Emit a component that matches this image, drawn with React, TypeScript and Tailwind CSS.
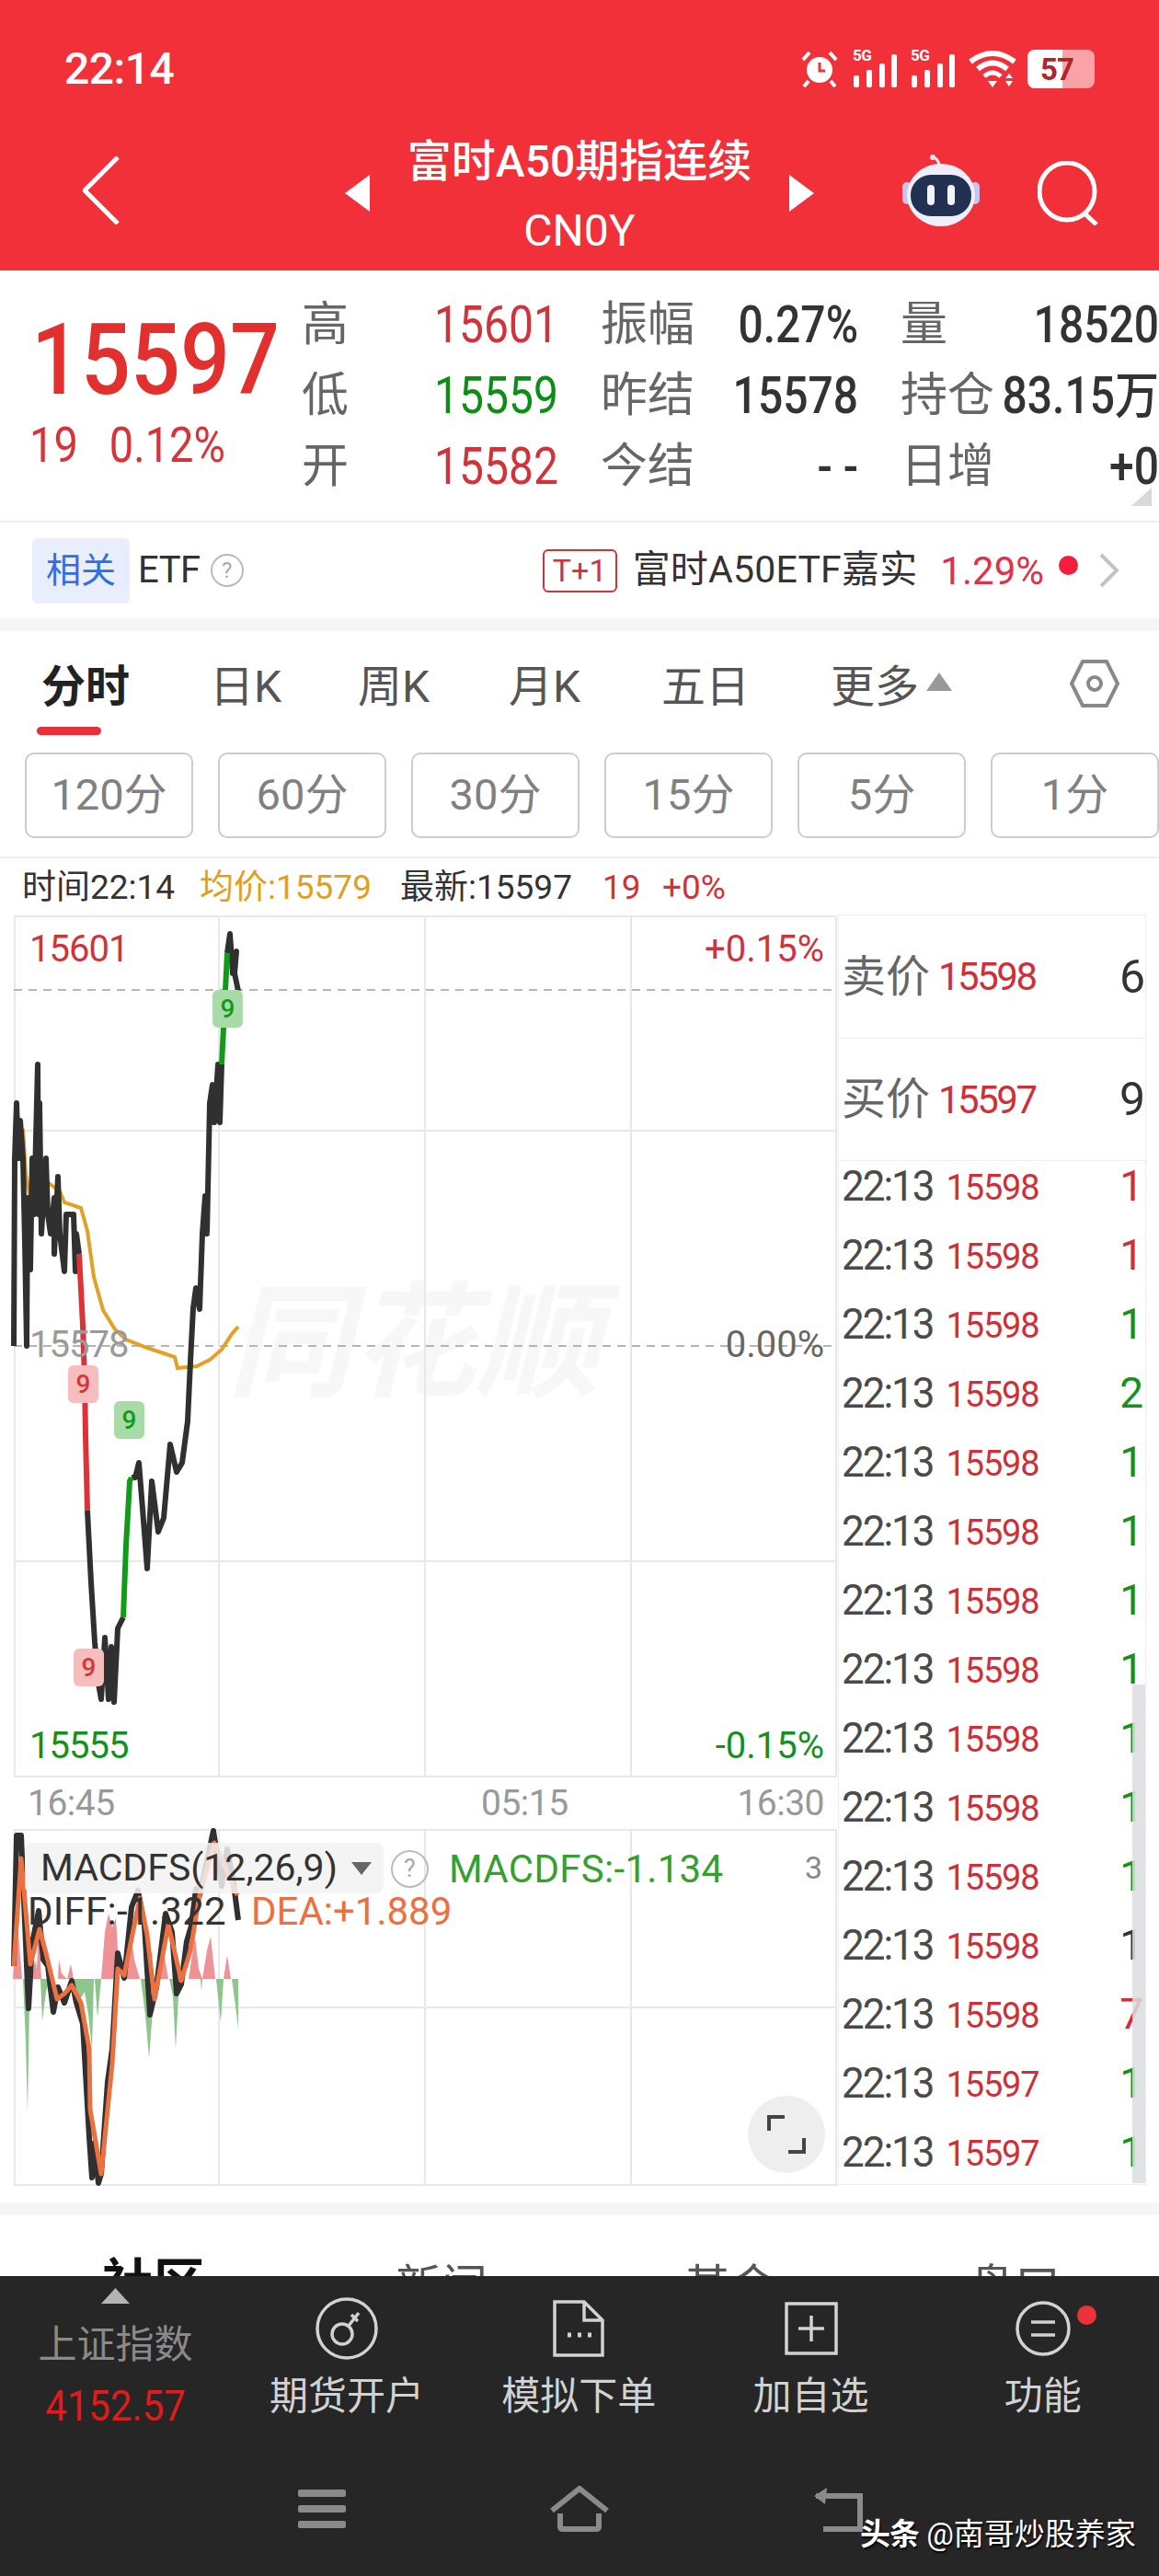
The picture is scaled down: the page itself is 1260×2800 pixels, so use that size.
const pricePre = "15,1463 16,1259 18,1199 20,1259 22,1218 25,1259 27,1350 29,1463 30,1302 33,1380 35,1259 37,1320 41,1157 42,1320 43,1199 45,1341 50,1259 52,1320 55,1341 59,1302 59,1363 63,1279 65,1341 70,1382 72,1320 80,1320 82,1382 83,1341 86,1363";
const priceRed = "86,1363 90,1440 92,1500 93,1560 95,1642";
const priceLow = "95,1642 99,1720 103,1785 107,1830 110,1847 114,1780 118,1847 121,1790 124,1850 128,1770 134,1758";
const priceGreen = "134,1758 137,1680 141,1610 143,1606";
const priceMid = "143,1606 147,1606 151,1590 155,1640 160,1705 165,1610 172,1665 178,1650 185,1570 192,1600 198,1590 204,1545 207,1480 210,1422 213,1400 217,1423 220,1341 223,1300 225,1341 228,1199 231,1179 233,1220 237,1157 239,1220 241,1157";
const priceGreen2 = "241,1157 247,1036";
const priceTop = "247,1036 250,1015 253,1058 257,1034 255,1058 259,1077";
const avg = "25,1227 28,1277 33,1302 50,1284 65,1295 70,1307 88,1313 95,1338 102,1388 112,1424 125,1445 137,1456 160,1465 190,1475 193,1487 214,1485 228,1478 241,1467 252,1450 259,1442";

const diff = "15,2137 18,1995 23,1995 31,2183 35,2112 42,2077 47,2130 52,2137 58,2187 63,2160 70,2177 78,2153 83,2177 90,2200 97,2323 100,2367 102,2330 107,2373 110,2363 117,2263 122,2227 128,2123 135,2150 143,2073 150,2055 157,2093 163,2190 170,2160 180,2080 187,2100 192,2167 197,2157 203,2110 208,2093 213,2053 217,2060 232,1990 241,2050 247,2010 253,2040 259,2087";
const dea = "15,2137 23,2020 33,2135 43,2097 50,2123 62,2173 70,2167 78,2158 88,2177 97,2227 98,2293 110,2363 117,2293 122,2243 128,2140 135,2147 152,2063 160,2103 168,2173 183,2092 197,2153 207,2120 217,2060 233,2003 258,2060";
const histRed = [
  "14,2151 18,2077 24,2151",
  "35,2151 38,2130 40,2140 42,2095 45,2151",
  "63,2151 64,2130 67,2145 73,2151 77,2135 80,2151",
  "110,2151 114,2100 118,2080 122,2095 126,2085 130,2151",
  "136,2151 142,2100 146,2130 152,2151",
  "169,2151 172,2130 176,2110 183,2151",
  "205,2151 212,2105 216,2140 220,2151 225,2120 229,2105 234,2151",
  "243,2151 247,2125 251,2151",
];
const histGreen = [
  "25,2151 28,2220 30,2297 32,2180 34,2151",
  "44,2151 46,2197 50,2165 54,2151",
  "80,2151 86,2175 92,2165 96,2190 100,2227 102,2151",
  "103,2151 106,2193 110,2151",
  "153,2151 158,2190 162,2237 166,2185 168,2151",
  "184,2151 188,2170 191,2227 195,2151",
  "218,2151 219,2165 220,2151",
  "235,2151 240,2198 243,2151",
  "252,2151 256,2180 259,2205 259,2151",
];

const rows: [string, string, string][] = [
  ["15598", "1", "text-[#CF3038]"],
  ["15598", "1", "text-[#CF3038]"],
  ["15598", "1", "text-[#16901C]"],
  ["15598", "2", "text-[#16901C]"],
  ["15598", "1", "text-[#16901C]"],
  ["15598", "1", "text-[#16901C]"],
  ["15598", "1", "text-[#16901C]"],
  ["15598", "1", "text-[#16901C]"],
  ["15598", "1", "text-[#16901C]"],
  ["15598", "1", "text-[#16901C]"],
  ["15598", "1", "text-[#16901C]"],
  ["15598", "1", "text-[#333333]"],
  ["15598", "7", "text-[#CF3038]"],
  ["15597", "1", "text-[#16901C]"],
  ["15597", "1", "text-[#16901C]"],
];

const tall = "inline-block scale-y-[1.14]";

function Alarm() {
  return (
    <svg width="40" height="40" viewBox="0 0 40 40" fill="none">
      <circle cx="20" cy="21" r="14" fill="#fff" />
      <path d="M20 13v9h6" stroke="#F2303A" strokeWidth="3" />
      <path d="M2 10 9 2M38 10 31 2" stroke="#fff" strokeWidth="4" />
      <path d="M8 33 3 39M32 33l5 6" stroke="#fff" strokeWidth="4" />
    </svg>
  );
}

function Signal() {
  return (
    <div className="relative w-[49px] h-[42px]">
      <span className="absolute left-0 -top-[3px] text-[17px] leading-[18px] font-bold text-white tracking-[-0.5px]">5G</span>
      <svg className="absolute left-0 top-0" width="49" height="42" viewBox="0 0 49 42" fill="#fff">
        <rect x="1" y="28" width="6" height="13" rx="2" />
        <rect x="15" y="22" width="6" height="19" rx="2" />
        <rect x="29" y="15" width="6" height="26" rx="2" />
        <rect x="42" y="5" width="6" height="36" rx="2" />
      </svg>
    </div>
  );
}

function Wifi() {
  return (
    <svg width="52" height="42" viewBox="0 0 52 42" fill="none" stroke="#fff">
      <path d="M2 13Q26-5 50 13" strokeWidth="6" />
      <path d="M10 21Q26 8 42 21" strokeWidth="6" />
      <path d="M17 29Q26 21 35 29" strokeWidth="5" />
      <path d="M21 34h10l-5 7z" fill="#fff" stroke="none" />
      <path d="M40 31l4-5 4 5zM40 34h8l-4 6z" fill="#fff" stroke="none" />
    </svg>
  );
}

function Robot() {
  return (
    <svg width="84" height="78" viewBox="0 0 84 78">
      <path d="M40 12C40 6 36 4 33 2" stroke="#E9E6F5" strokeWidth="3" fill="none" />
      <circle cx="33" cy="3" r="3" fill="#E9E6F5" />
      <rect x="0" y="30" width="10" height="24" rx="5" fill="#C9C4EE" />
      <rect x="74" y="30" width="10" height="24" rx="5" fill="#C9C4EE" />
      <ellipse cx="42" cy="44" rx="37" ry="34" fill="#EFEEFB" />
      <rect x="9" y="22" width="66" height="45" rx="22" fill="#223052" />
      <rect x="27" y="33" width="8" height="22" rx="4" fill="#F3F4FA" />
      <rect x="49" y="33" width="8" height="22" rx="4" fill="#F3F4FA" />
    </svg>
  );
}

function HelpDot({ size, text }: { size: string; text: string }) {
  return (
    <span className={`${size} ${text} inline-flex items-center justify-center rounded-full border-2 border-[#BBBBBB] text-[#AAAAAA] leading-none`}>?</span>
  );
}

function NavItem({ label, children }: { label: string; children: React.ReactNode }) {
  return (
    <div className="relative w-[253px] flex flex-col items-center">
      <div className="h-[68px] flex items-center">{children}</div>
      <div className="mt-[16px] text-[42px] leading-[48px] text-[#D2D2D2]">{label}</div>
    </div>
  );
}

function Badge({ green, className }: { green?: boolean; className: string }) {
  return (
    <div className={`absolute w-[33px] h-[41px] rounded-[6px] flex items-center justify-center text-[28px] font-medium ${green ? "bg-[#A9DBA9] text-[#129A1A]" : "bg-[#F6BDBD] text-[#D8343A]"} ${className}`}>9</div>
  );
}

export default function App() {
  return (
    <div className="relative w-[1260px] h-[2800px] overflow-hidden bg-white font-[Roboto,'Noto_Sans_CJK_SC',sans-serif]">
      <header className="h-[294px] bg-[#F2303A] text-white">
        <div className="h-[140px] pt-[10px] pl-[70px] pr-[70px] flex items-center justify-between">
          <div className="text-[48px] font-medium leading-none tracking-[-0.5px]">22:14</div>
          <div className="flex items-center">
            <Alarm />
            <div className="ml-[16px]"><Signal /></div>
            <div className="ml-[14px]"><Signal /></div>
            <div className="ml-[14px]"><Wifi /></div>
            <div className="ml-[12px] relative w-[73px] h-[42px] rounded-[8px] bg-[#F9A3A7] overflow-hidden flex">
              <div className="w-[38px] bg-white" />
              <span className="absolute left-[14px] top-[5px] text-[33px] leading-[33px] font-bold text-[#B2232C] tracking-[-1px]">57</span>
            </div>
          </div>
        </div>
        <div className="flex items-start">
          <div className="w-[375px] pl-[90px] pt-[30px]">
            <svg width="40" height="74" viewBox="0 0 40 74" fill="none">
              <path d="M38 1 2 37l36 36" stroke="#fff" strokeWidth="5" />
            </svg>
          </div>
          <svg className="mt-[50px]" width="27" height="40" viewBox="0 0 27 40"><path d="M27 0v40L0 20z" fill="#fff" /></svg>
          <div className="w-[456px] pt-[6px] text-center">
            <div className="text-[48px] leading-[60px] font-medium">富时A50期指连续</div>
            <div className="mt-[15px] text-[48px] leading-[60px]">CN0Y</div>
          </div>
          <svg className="mt-[50px]" width="27" height="40" viewBox="0 0 27 40"><path d="M0 0v40l27-20z" fill="#fff" /></svg>
          <div className="ml-[96px] mt-[28px]"><Robot /></div>
          <svg className="ml-[63px] mt-[35px]" width="70" height="70" viewBox="0 0 70 70" fill="none" stroke="#fff" strokeWidth="5">
            <ellipse cx="32" cy="33" rx="30" ry="31" />
            <path d="M51 57l13 12" />
          </svg>
        </div>
      </header>

      <section className="relative h-[272px] flex">
        <div className="w-[328px] pl-[34px]">
          <div className="mt-[42px] text-[95px] leading-[112px] font-medium text-[#E2302F]"><span className={tall}>15597</span></div>
          <div className="mt-[10px] -ml-[2px] text-[47px] leading-[52px] text-[#D73338] flex gap-[34px]">
            <span className={tall}>19</span>
            <span className={tall}>0.12%</span>
          </div>
        </div>
        <div className="pt-[21px] grid grid-cols-[279px_280px_281px] gap-x-[46px] auto-rows-[77px] text-[51px] text-[#666666] whitespace-nowrap">
          {[
            ["高", "15601", "text-[#D0333A]", "振幅", "0.27%", "量", "18520"],
            ["低", "15559", "text-[#0A8F12]", "昨结", "15578", "持仓", "83.15万"],
            ["开", "15582", "text-[#D0333A]", "今结", "- -", "日增", "+0"],
          ].map((r) => (
            <div key={r[0]} className="contents">
              <div className="flex items-center justify-between">
                <span>{r[0]}</span>
                <span className={`${tall} text-[48px] ${r[2]}`}>{r[1]}</span>
              </div>
              <div className="flex items-center justify-between">
                <span>{r[3]}</span>
                <span className={`${tall} text-[48px] font-medium text-[#333333]`}>{r[4]}</span>
              </div>
              <div className="flex items-center justify-between">
                <span>{r[5]}</span>
                <span className={`${tall} text-[48px] font-medium text-[#333333]`}>{r[6]}</span>
              </div>
            </div>
          ))}
        </div>
        <svg className="absolute left-[1230px] top-[236px]" width="22" height="20" viewBox="0 0 22 20"><path d="M22 0v20H0z" fill="#D9D9D9" /></svg>
      </section>

      <section className="h-[106px] border-t-2 border-[#EEEEEE] flex items-center pl-[35px] pr-[44px]">
        <div className="w-[106px] h-[71px] rounded-[6px] bg-[#E8EEFB] flex items-center justify-center text-[38px] text-[#2F6FDE]">相关</div>
        <div className="ml-[9px] text-[40px] text-[#333333] tracking-[-0.5px]">ETF</div>
        <HelpDot size="w-[36px] h-[36px] ml-[11px]" text="text-[24px]" />
        <div className="ml-auto w-[81px] h-[47px] rounded-[6px] border-2 border-[#D0333A] flex items-center justify-center text-[34px] text-[#D0333A]">T+1</div>
        <div className="ml-[17px] text-[41px] text-[#333333] tracking-[0.2px] whitespace-nowrap">富时A50ETF嘉实</div>
        <div className="ml-[25px] text-[42px] text-[#E0304A]">1.29%</div>
        <div className="ml-[16px] -mt-[12px] w-[21px] h-[21px] rounded-full bg-[#F2203A]" />
        <svg className="ml-[23px]" width="21" height="38" viewBox="0 0 21 38" fill="none"><path d="M2 2l17 17L2 36" stroke="#C4C4C4" strokeWidth="4" /></svg>
      </section>
      <div className="h-[14px] bg-[#F5F5F5]" />

      <nav className="relative h-[132px] text-[48px] text-[#555555] whitespace-nowrap flex items-start pt-[25px] pl-[45px]">
        <div className="w-[183px] relative">
          <div className="font-bold text-[#222222]">分时</div>
          <div className="absolute left-0 top-[79px] w-[70px] h-[9px] rounded-full bg-[#E93038] translate-x-[-5px]" />
        </div>
        <div className="w-[161px]">日K</div>
        <div className="w-[164px]">周K</div>
        <div className="w-[166px]">月K</div>
        <div className="w-[184px]">五日</div>
        <div className="flex items-center">
          更多
          <svg className="ml-[8px] -mt-[12px]" width="28" height="20" viewBox="0 0 28 20"><path d="M14 0l14 20H0z" fill="#999999" /></svg>
        </div>
        <svg className="ml-[128px] mt-[5px]" width="54" height="54" viewBox="0 0 54 54" fill="none" stroke="#888888" strokeWidth="4">
          <path d="M14 3h26l12 24-12 24H14L2 27z" />
          <circle cx="27" cy="27" r="7" />
        </svg>
      </nav>

      <div className="h-[93px] flex pl-[27px] gap-[27px] text-[47px] text-[#808080]">
        {["120分", "60分", "30分", "15分", "5分", "1分"].map((t) => (
          <div key={t} className="w-[183px] shrink-0 rounded-[10px] border-2 border-[#CCCCCC] flex items-center justify-center">{t}</div>
        ))}
      </div>

      <div className="mt-[20px] h-[65px] border-t-2 border-[#EEEEEE] pl-[24px] flex items-center text-[37px] text-[#333333] whitespace-nowrap">
        <span className="w-[193px]">时间22:14</span>
        <span className="w-[218px] text-[#E0A01E]">均价:15579</span>
        <span className="w-[220px]">最新:15597</span>
        <span className="w-[65px] text-[#D0333A]">19</span>
        <span className="text-[#D0333A]">+0%</span>
      </div>

      <div className="flex pl-[15px]">
        <div className="w-[896px] shrink-0">
          <div className="relative h-[935px]">
            <div className="absolute left-[232px] top-[390px] text-[135px] leading-[150px] italic font-bold text-[#F7F7F7] whitespace-nowrap">同花顺</div>
            <svg className="absolute inset-0 overflow-visible" width="895" height="935" viewBox="15 996 895 935" fill="none">
              <g stroke="#E8E8E8" strokeWidth="2">
                <path d="M15 996H910M15 1229H910M15 1697H910M15 1931H910" />
                <path d="M16 996V1931M238 996V1931M462 996V1931M686 996V1931M909 996V1931" />
              </g>
              <path d="M15 1076H910" stroke="#CDB48C" strokeWidth="2" strokeDasharray="9 7" />
              <path d="M15 1463H910" stroke="#B4B4B4" strokeWidth="2" strokeDasharray="9 7" />
              <polyline points={avg} stroke="#E2A126" strokeWidth="4" />
              <g strokeWidth="6" strokeLinejoin="round">
                <polyline points={pricePre} stroke="#303030" />
                <polyline points={priceLow} stroke="#303030" />
                <polyline points={priceMid} stroke="#303030" />
                <polyline points={priceTop} stroke="#303030" />
              </g>
              <g strokeWidth="6" strokeLinejoin="round">
                <polyline points={priceRed} stroke="#DD3236" />
                <polyline points={priceGreen} stroke="#119B19" />
                <polyline points={priceGreen2} stroke="#119B19" />
              </g>
            </svg>
            <Badge green className="left-[216px] top-[80px]" />
            <Badge green className="left-[109px] top-[527px]" />
            <Badge className="left-[59px] top-[488px]" />
            <Badge className="left-[65px] top-[796px]" />
            <div className="absolute left-[17px] top-[12px] text-[40px] leading-[48px] text-[#D0333A] tracking-[-1px]">15601</div>
            <div className="absolute right-[15px] top-[12px] text-[40px] leading-[48px] text-[#D0333A]">+0.15%</div>
            <div className="absolute left-[17px] top-[442px] text-[40px] leading-[48px] text-[#9A9A9A] tracking-[-1px]">15578</div>
            <div className="absolute right-[15px] top-[442px] text-[40px] leading-[48px] text-[#666666]">0.00%</div>
            <div className="absolute left-[17px] top-[878px] text-[40px] leading-[48px] text-[#16901C] tracking-[-1px]">15555</div>
            <div className="absolute right-[15px] top-[878px] text-[40px] leading-[48px] text-[#16901C]">-0.15%</div>
          </div>
          <div className="h-[58px] pl-[15px] pr-[15px] flex items-center text-[39px] text-[#999999] tracking-[-0.5px]">
            <span className="w-[493px]">16:45</span>
            <span>05:15</span>
            <span className="ml-auto">16:30</span>
          </div>
          <div className="relative h-[386px]">
            <svg className="absolute inset-0 overflow-visible" width="895" height="386" viewBox="15 1989 895 386" fill="none">
              <g stroke="#E8E8E8" strokeWidth="2">
                <path d="M15 1989H910M15 2182H910M15 2375H910" />
                <path d="M16 1989V2375M238 1989V2375M462 1989V2375M686 1989V2375M909 1989V2375" />
              </g>
              {histRed.map((p) => <polygon key={p} points={p} fill="#EE9296" />)}
              {histGreen.map((p) => <polygon key={p} points={p} fill="#8CC68C" />)}
              <polyline points={diff} stroke="#303030" strokeWidth="6" strokeLinejoin="round" />
              <polyline points={dea} stroke="#EC7040" strokeWidth="5" strokeLinejoin="round" />
            </svg>
            <div className="absolute left-[12px] top-[14px] w-[390px] h-[55px] rounded-[8px] bg-[#F2F2F2]/85 pl-[17px] flex items-center text-[41px] text-[#333333] whitespace-nowrap">
              MACDFS(12,26,9)
              <svg className="ml-[15px]" width="22" height="14" viewBox="0 0 22 14"><path d="M0 0h22L11 14z" fill="#666666" /></svg>
            </div>
            <HelpDot size="absolute left-[410px] top-[22px] w-[41px] h-[41px]" text="text-[27px]" />
            <div className="absolute left-[473px] top-[19px] text-[42px] leading-[48px] text-[#36A02E] whitespace-nowrap tracking-[0.3px]">MACDFS:-1.134</div>
            <div className="absolute left-[860px] top-[19px] text-[34px] leading-[44px] text-[#888888]">3</div>
            <div className="absolute left-[15px] top-[65px] text-[42px] leading-[48px] text-[#333333] whitespace-nowrap tracking-[0.3px]">DIFF:-1.322</div>
            <div className="absolute left-[258px] top-[65px] text-[42px] leading-[48px] text-[#EC7040] whitespace-nowrap">DEA:+1.889</div>
            <div className="absolute left-[798px] top-[289px] w-[84px] h-[84px] rounded-full bg-[#EEEEEE] flex items-center justify-center">
              <svg width="46" height="44" viewBox="0 0 46 44" fill="none" stroke="#444444" strokeWidth="4">
                <path d="M4 18V3h17M25 41h17V26" />
              </svg>
            </div>
          </div>
        </div>
        <aside className="relative -mt-[2px] w-[335px] h-[1381px] border border-[#EEEEEE] overflow-hidden">
          <div className="h-[134px] border-b border-[#EEEEEE] flex items-center pl-[3px] pr-0">
            <span className="text-[48px] text-[#666666]">卖价</span>
            <span className="ml-[9px] text-[42px] text-[#CF3038] tracking-[-2.5px]">15598</span>
            <span className="ml-auto text-[50px] leading-none text-[#333333]">6</span>
          </div>
          <div className="h-[133px] border-b border-[#EEEEEE] flex items-center pl-[3px] pr-0">
            <span className="text-[48px] text-[#666666]">买价</span>
            <span className="ml-[9px] text-[42px] text-[#CF3038] tracking-[-2.5px]">15597</span>
            <span className="ml-auto text-[50px] leading-none text-[#333333]">9</span>
          </div>
          <div className="h-[1113px] overflow-hidden">
            {rows.map((r, i) => (
              <div key={i} className="h-[75px] pl-[3px] pr-[2px] flex items-start whitespace-nowrap">
                <span className="inline-block scale-y-[1.07] text-[44px] leading-[54px] text-[#4A4A4A] tracking-[-2px]">22:13</span>
                <span className="ml-[14px] text-[38px] leading-[58px] text-[#CF3038] tracking-[-1.2px]">{r[0]}</span>
                <span className={`ml-auto text-[46px] leading-[54px] ${r[2]}`}>{r[1]}</span>
              </div>
            ))}
          </div>
          <div className="absolute right-0 top-[836px] w-[14px] h-[542px] bg-[#DCDDE1]/85" />
        </aside>
      </div>

      <div className="mt-[19px] h-[14px] bg-[#F5F5F5]" />
      <div className="relative h-[66px] overflow-hidden text-[50px] leading-[60px] text-[#555555] whitespace-nowrap">
        <span className="absolute left-[111px] top-[44px] text-[56px] font-bold text-[#111111]">社区</span>
        <span className="absolute left-[430px] top-[48px]">新闻</span>
        <span className="absolute left-[744px] top-[48px]">基金</span>
        <span className="absolute left-[1053px] top-[48px]">盘口</span>
      </div>

      <footer className="relative h-[326px] bg-[#262626]">
        <div className="flex pt-[23px]">
          <div className="relative w-[251px] shrink-0 flex flex-col items-center -mt-[10px]">
            <svg width="31" height="17" viewBox="0 0 31 17"><path d="M15.5 0 31 17H0z" fill="#B4B4B4" /></svg>
            <div className="mt-[20px] text-[42px] leading-[50px] text-[#8A8A8A]">上证指数</div>
            <div className="mt-[17px] text-[42px] leading-[50px] text-[#E01B1B]"><span className="inline-block scale-y-[1.1]">4152.57</span></div>
          </div>
          <NavItem label="期货开户">
            <svg width="68" height="68" viewBox="0 0 68 68" fill="none" stroke="#D2D2D2" strokeWidth="3.5">
              <circle cx="34" cy="34" r="32" />
              <circle cx="29" cy="40" r="11" />
              <path d="M36 31l11-14M39 19l7 7" />
            </svg>
          </NavItem>
          <NavItem label="模拟下单">
            <svg width="56" height="62" viewBox="0 0 56 62" fill="none" stroke="#D2D2D2" strokeWidth="3.5">
              <path d="M2 2h32l20 20v38H2zM34 2v20h20" />
              <path d="M16 38h4M27 38h4M38 38h4" strokeWidth="5" />
            </svg>
          </NavItem>
          <NavItem label="加自选">
            <svg width="58" height="58" viewBox="0 0 58 58" fill="none" stroke="#D2D2D2" strokeWidth="3.5">
              <path d="M2 2h54v54H2zM29 15v28M15 29h28" />
            </svg>
          </NavItem>
          <NavItem label="功能">
            <svg width="60" height="60" viewBox="0 0 60 60" fill="none" stroke="#D2D2D2" strokeWidth="3.5">
              <circle cx="30" cy="30" r="28" />
              <path d="M17 23h26M17 37h26" />
            </svg>
            <span className="absolute left-[163px] top-[9px] w-[21px] h-[21px] rounded-full bg-[#EE3138]" />
          </NavItem>
        </div>
        <svg className="absolute left-[324px] top-[232px]" width="52" height="42" viewBox="0 0 52 42" fill="#8A8A8A">
          <rect y="0" width="52" height="8" rx="2" />
          <rect y="17" width="52" height="8" rx="2" />
          <rect y="34" width="52" height="8" rx="2" />
        </svg>
        <svg className="absolute left-[597px] top-[228px]" width="66" height="50" viewBox="0 0 66 50" fill="none" stroke="#8A8A8A" strokeWidth="6">
          <path d="M3 27 33 3l30 24" />
          <path d="M12 30v14q0 3 3 3h36q3 0 3-3V30" />
        </svg>
        <svg className="absolute left-[883px] top-[229px]" width="56" height="50" viewBox="0 0 56 50" fill="none" stroke="#8A8A8A" strokeWidth="6">
          <path d="M4 10h48v36H12" />
          <path d="M16 1 2 10l12 9" fill="#8A8A8A" stroke="none" />
        </svg>
        <div className="absolute left-[935px] top-[258px] text-[33px] leading-[46px] text-white whitespace-nowrap [text-shadow:1px_2px_2px_#000]">
          <span className="font-bold tracking-[-1px]">头条</span> @南哥炒股养家
        </div>
      </footer>
    </div>
  );
}
